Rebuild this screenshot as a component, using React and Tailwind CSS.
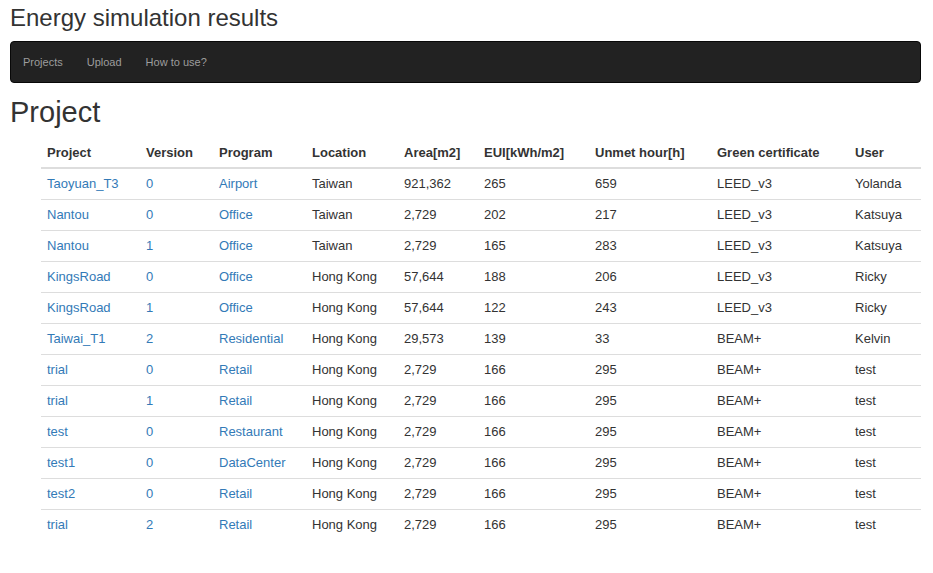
const ROWS = [
  ["Taoyuan_T3", "0", "Airport", "Taiwan", "921,362", "265", "659", "LEED_v3", "Yolanda"],
  ["Nantou", "0", "Office", "Taiwan", "2,729", "202", "217", "LEED_v3", "Katsuya"],
  ["Nantou", "1", "Office", "Taiwan", "2,729", "165", "283", "LEED_v3", "Katsuya"],
  ["KingsRoad", "0", "Office", "Hong Kong", "57,644", "188", "206", "LEED_v3", "Ricky"],
  ["KingsRoad", "1", "Office", "Hong Kong", "57,644", "122", "243", "LEED_v3", "Ricky"],
  ["Taiwai_T1", "2", "Residential", "Hong Kong", "29,573", "139", "33", "BEAM+", "Kelvin"],
  ["trial", "0", "Retail", "Hong Kong", "2,729", "166", "295", "BEAM+", "test"],
  ["trial", "1", "Retail", "Hong Kong", "2,729", "166", "295", "BEAM+", "test"],
  ["test", "0", "Restaurant", "Hong Kong", "2,729", "166", "295", "BEAM+", "test"],
  ["test1", "0", "DataCenter", "Hong Kong", "2,729", "166", "295", "BEAM+", "test"],
  ["test2", "0", "Retail", "Hong Kong", "2,729", "166", "295", "BEAM+", "test"],
  ["trial", "2", "Retail", "Hong Kong", "2,729", "166", "295", "BEAM+", "test"],
];

const HEADERS = ["Project", "Version", "Program", "Location", "Area[m2]", "EUI[kWh/m2]", "Unmet hour[h]", "Green certificate", "User"];
const WIDTHS = ["w-[99px]", "w-[73px]", "w-[93px]", "w-[92px]", "w-[80px]", "w-[111px]", "w-[122px]", "w-[138px]", "w-auto"];

export default function App() {
  return (
    <div className="min-h-screen bg-white pl-[10px] pr-[12px] text-[#333] font-['Liberation_Sans',Arial,sans-serif]">
      <h3 className="pt-[5px] text-[24px] leading-[1.1] font-normal">Energy simulation results</h3>

      <nav className="mt-[10px] h-[42px] rounded-[4px] border border-[#080808] bg-[#222] flex items-center">
        {["Projects", "Upload", "How to use?"].map(l => (
          <a key={l} href="#" className="px-[12px] text-[11px] leading-[20px] text-[#9d9d9d] hover:text-white">{l}</a>
        ))}
      </nav>

      <h2 className="mt-[14px] text-[29px] leading-[1.1] font-normal">Project</h2>

      <table className="mt-[8px] ml-[31px] w-[880px] border-collapse text-[13px] leading-[20px] table-fixed">
        <thead>
          <tr>
            {HEADERS.map((h, i) => (
              <th key={h} className={`${WIDTHS[i]} text-left font-bold px-[6px] pt-[6px] pb-[4px] border-b-2 border-[#ddd]`}>{h}</th>
            ))}
          </tr>
        </thead>
        <tbody>
          {ROWS.map((r, ri) => (
            <tr key={ri}>
              {r.map((c, ci) => (
                <td key={ci} className="px-[6px] py-[5px] border-t border-[#ddd]">
                  {ci < 3 ? <a href="#" className="text-[#337ab7] hover:underline">{c}</a> : c}
                </td>
              ))}
            </tr>
          ))}
        </tbody>
      </table>
    </div>
  );
}
